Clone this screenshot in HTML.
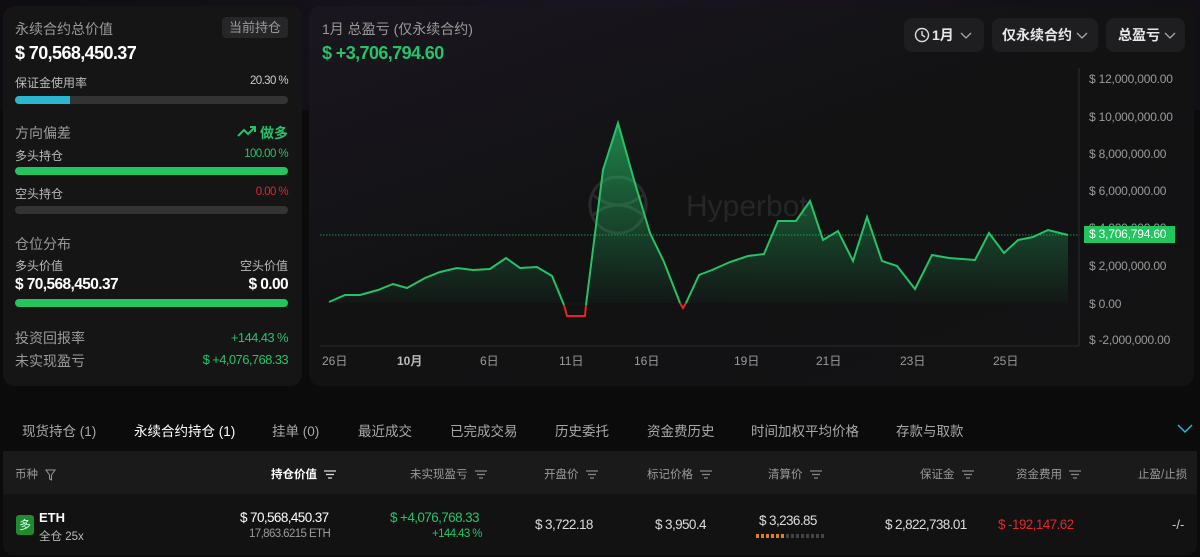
<!DOCTYPE html>
<html><head><meta charset="utf-8"><style>
*{margin:0;padding:0;box-sizing:border-box}
body{width:1200px;height:557px;overflow:hidden;background:#0b0b0c;font-family:"Liberation Sans","Noto Sans CJK SC",sans-serif;color:#fff;position:relative}
.a{position:absolute;white-space:nowrap}
.r{position:absolute;white-space:nowrap;right:912px;text-align:right}
.p{position:absolute;border-radius:12px}
.g{color:#9a9a9a}.gr{color:#25c367}.rd{color:#e0262b}
.n{letter-spacing:-0.6px}
.bar{position:absolute;height:8px;border-radius:4px;background:#333}
.btn{position:absolute;top:18px;height:34px;background:#1e1e20;border-radius:8px;font-size:14px;font-weight:bold;color:#e8e8e8;line-height:34px;padding-left:12px}
.btn svg.c{position:absolute;top:14px}
.yl{position:absolute;left:1089px;font-size:12px;color:#9a9a9a;letter-spacing:-0.2px}
.xl{position:absolute;top:352px;font-size:12px;color:#9a9a9a}
.tab{position:absolute;top:420px;font-size:13.5px;color:#a8a8a8}
.th{position:absolute;top:466px;font-size:11.5px;color:#9a9a9a}
.f{display:inline-block;vertical-align:middle;margin-left:4px}
</style></head><body>
<div class="p" style="left:0;top:-20px;width:1200px;height:130px;border-radius:0;background:linear-gradient(90deg,#0f0d12,#1a1420 50%,#120f16)"></div>
<div class="p" style="left:3px;top:6px;width:299px;height:380px;background:#151516"></div>
<div class="a g" style="left:15px;top:19px;font-size:14px">永续合约总价值</div>
<div class="a" style="left:222px;top:17px;width:66px;height:21px;background:#262628;border-radius:4px;font-size:13px;color:#9a9a9a;text-align:center;line-height:21px">当前持仓</div>
<div class="a n" style="left:15px;top:43px;font-size:18px;font-weight:bold">$ 70,568,450.37</div>
<div class="a" style="left:15px;top:74px;font-size:12px;color:#bbb">保证金使用率</div>
<div class="r n" style="top:75px;font-size:11.5px;color:#ccc">20.30 %</div>
<div class="bar" style="left:15px;top:96px;width:273px"></div>
<div class="bar" style="left:15px;top:96px;width:55px;background:#2bb6cf;border-radius:4px 0 0 4px"></div>
<div class="a g" style="left:15px;top:123px;font-size:14px">方向偏差</div>
<svg class="a" style="left:237px;top:126px" width="20" height="12" viewBox="0 0 20 12"><path d="M1 10 L7 4 L11 8 L18 1 M13 1 H18 V6" stroke="#25c367" stroke-width="2" fill="none"/></svg>
<div class="r gr" style="top:123px;font-size:14px;font-weight:bold">做多</div>
<div class="a" style="left:15px;top:147px;font-size:12px;color:#bbb">多头持仓</div>
<div class="r gr n" style="top:148px;font-size:11.5px">100.00 %</div>
<div class="bar" style="left:15px;top:167px;width:273px;background:#22c55e"></div>
<div class="a" style="left:15px;top:185px;font-size:12px;color:#bbb">空头持仓</div>
<div class="r rd n" style="top:186px;font-size:11.5px">0.00 %</div>
<div class="bar" style="left:15px;top:206px;width:273px"></div>
<div class="a g" style="left:15px;top:234px;font-size:14px">仓位分布</div>
<div class="a" style="left:15px;top:257px;font-size:12px;color:#bbb">多头价值</div>
<div class="r" style="top:257px;font-size:12px;color:#bbb">空头价值</div>
<div class="a n" style="left:15px;top:276px;font-size:15.5px;font-weight:bold">$ 70,568,450.37</div>
<div class="r n" style="top:276px;font-size:15.5px;font-weight:bold">$ 0.00</div>
<div class="bar" style="left:15px;top:299px;width:273px;background:#22c55e"></div>
<div class="a g" style="left:15px;top:328px;font-size:14px">投资回报率</div>
<div class="r gr n" style="top:330px;font-size:13px">+144.43 %</div>
<div class="a g" style="left:15px;top:351px;font-size:14px">未实现盈亏</div>
<div class="r gr n" style="top:352px;font-size:13px">$ +4,076,768.33</div>
<div class="p" style="left:309px;top:6px;width:885px;height:380px;background:linear-gradient(160deg,#1a1620,#121213 45%,#131314)"></div>
<div class="a g" style="left:322px;top:19px;font-size:14px">1月 总盈亏 (仅永续合约)</div>
<div class="a gr n" style="left:322px;top:43px;font-size:18px;font-weight:bold">$ +3,706,794.60</div>
<div class="btn" style="left:904px;width:80px"><svg style="position:absolute;left:10px;top:9px" width="16" height="16" viewBox="0 0 16 16"><circle cx="8" cy="8" r="6.5" stroke="#ddd" stroke-width="1.4" fill="none"/><path d="M8 4 V8 L11 10" stroke="#ddd" stroke-width="1.4" fill="none"/></svg><span style="margin-left:16px">1月</span><svg class="c" style="left:56px" width="12" height="7"><path d="M1 1 L6 6 L11 1" stroke="#aaa" stroke-width="1.3" fill="none"/></svg></div>
<div class="btn" style="left:992px;width:106px;padding-left:10px">仅永续合约<svg class="c" style="left:84px" width="12" height="7"><path d="M1 1 L6 6 L11 1" stroke="#aaa" stroke-width="1.3" fill="none"/></svg></div>
<div class="btn" style="left:1106px;width:79px">总盈亏<svg class="c" style="left:58px" width="12" height="7"><path d="M1 1 L6 6 L11 1" stroke="#aaa" stroke-width="1.3" fill="none"/></svg></div>
<svg class="a" style="left:588px;top:175px" width="260" height="60"><ellipse cx="30" cy="30" rx="28" ry="28" stroke="#2a2a2c" stroke-width="3" fill="none"/><path d="M5 20 Q30 40 55 20 M5 40 Q30 20 55 40" stroke="#2a2a2c" stroke-width="3" fill="none"/><text x="98" y="41" font-family="Liberation Sans" font-size="30" fill="#262628">Hyperbot</text></svg>
<svg class="a" style="left:0;top:0" width="1200" height="400">
<defs><linearGradient id="fg" x1="0" y1="120" x2="0" y2="305" gradientUnits="userSpaceOnUse"><stop offset="0" stop-color="#25c367" stop-opacity=".65"/><stop offset="1" stop-color="#25c367" stop-opacity="0.02"/></linearGradient></defs>
<line x1="1079" y1="68" x2="1079" y2="346" stroke="#2c2c2e"/>
<line x1="320" y1="346" x2="1079" y2="346" stroke="#2c2c2e"/>
<path d="M329 302 L345 295 L360 295 L378 290 L393 284 L407 288 L425 278 L440 272 L457 268 L473 270 L490 269 L506 258 L520 268 L537 267 L552 276 L564 305 L588 305 L603 170 L618 123 L634 180 L650 233 L664 262 L680 303 L686 303 L699 275 L712 270 L730 262 L748 256 L764 254 L778 221 L796 221 L810 201 L823 240 L838 231 L853 261 L867 217 L882 261 L897 266 L915 289 L932 255 L949 258 L975 260 L989 233 L1004 253 L1018 240 L1033 237 L1048 230 L1068 235 L1068 303 L329 303 Z" fill="url(#fg)"/>
<line x1="320" y1="235" x2="1079" y2="235" stroke="#25c367" stroke-width="1" stroke-dasharray="1.5 1.5" opacity=".7"/>
<path d="M329 302 L345 295 L360 295 L378 290 L393 284 L407 288 L425 278 L440 272 L457 268 L473 270 L490 269 L506 258 L520 268 L537 267 L552 276 L564 305" stroke="#25c367" stroke-width="2" fill="none"/>
<path d="M564 305 L567 316 L585 316 L586 305" stroke="#e0262b" stroke-width="2" fill="none"/>
<path d="M586 305 L603 170 L618 123 L634 180 L650 233 L664 262 L680 303" stroke="#25c367" stroke-width="2" fill="none"/>
<path d="M680 303 L683 308 L686 303" stroke="#e0262b" stroke-width="2" fill="none"/>
<path d="M686 303 L699 275 L712 270 L730 262 L748 256 L764 254 L778 221 L796 221 L810 201 L823 240 L838 231 L853 261 L867 217 L882 261 L897 266 L915 289 L932 255 L949 258 L975 260 L989 233 L1004 253 L1018 240 L1033 237 L1048 230 L1068 235" stroke="#25c367" stroke-width="2" fill="none"/>
</svg>
<div class="yl" style="top:72px">$ 12,000,000.00</div>
<div class="yl" style="top:110px">$ 10,000,000.00</div>
<div class="yl" style="top:147px">$ 8,000,000.00</div>
<div class="yl" style="top:184px">$ 6,000,000.00</div>
<div class="yl" style="top:221px">$ 4,000,000.00</div>
<div class="yl" style="top:259px">$ 2,000,000.00</div>
<div class="yl" style="top:297px">$ 0.00</div>
<div class="yl" style="top:333px">$ -2,000,000.00</div>
<div class="a" style="left:1084px;top:226px;width:91px;height:17px;background:#22c55e;color:#fff;font-size:12px;line-height:17px;padding-left:5px;letter-spacing:-0.2px">$ 3,706,794.60</div>
<div class="xl" style="left:322px">26日</div>
<div class="xl" style="left:397px;font-weight:bold;color:#bbb">10月</div>
<div class="xl" style="left:480px">6日</div>
<div class="xl" style="left:559px">11日</div>
<div class="xl" style="left:634px">16日</div>
<div class="xl" style="left:734px">19日</div>
<div class="xl" style="left:816px">21日</div>
<div class="xl" style="left:900px">23日</div>
<div class="xl" style="left:993px">25日</div>
<div class="tab" style="left:22px">现货持仓 (1)</div>
<div class="tab" style="left:134px;color:#fff">永续合约持仓 (1)</div>
<div class="tab" style="left:272px">挂单 (0)</div>
<div class="tab" style="left:358px">最近成交</div>
<div class="tab" style="left:450px">已完成交易</div>
<div class="tab" style="left:555px">历史委托</div>
<div class="tab" style="left:647px">资金费历史</div>
<div class="tab" style="left:751px">时间加权平均价格</div>
<div class="tab" style="left:896px">存款与取款</div>
<svg class="a" style="left:1177px;top:424px" width="16" height="10"><path d="M1 1 L8 8 L15 1" stroke="#2bb6cf" stroke-width="1.5" fill="none"/></svg>
<div class="p" style="left:3px;top:451px;width:1194px;height:104px;background:#121213;border-radius:0 0 10px 10px"></div>
<div class="a" style="left:3px;top:451px;width:1194px;height:43px;background:#1a1a1b"></div>
<div class="th" style="left:15px">币种 <svg class="f" width="11" height="12"><path d="M1 1 H10 L6.5 6 V11 L4.5 10 V6 Z" stroke="#999" fill="none"/></svg></div>
<div class="th" style="left:271px;color:#fff;font-weight:bold">持仓价值 <svg class="f" width="12" height="9"><path d="M0 1H12M2 4.5H10M4 8H8" stroke="#ddd" stroke-width="1.3"/></svg></div>
<div class="th" style="left:410px">未实现盈亏 <svg class="f" width="12" height="9"><path d="M0 1H12M2 4.5H10M4 8H8" stroke="#888" stroke-width="1.3"/></svg></div>
<div class="th" style="left:544px">开盘价 <svg class="f" width="12" height="9"><path d="M0 1H12M2 4.5H10M4 8H8" stroke="#888" stroke-width="1.3"/></svg></div>
<div class="th" style="left:647px">标记价格 <svg class="f" width="12" height="9"><path d="M0 1H12M2 4.5H10M4 8H8" stroke="#888" stroke-width="1.3"/></svg></div>
<div class="th" style="left:768px">清算价 <svg class="f" width="12" height="9"><path d="M0 1H12M2 4.5H10M4 8H8" stroke="#888" stroke-width="1.3"/></svg></div>
<div class="th" style="left:920px">保证金 <svg class="f" width="12" height="9"><path d="M0 1H12M2 4.5H10M4 8H8" stroke="#888" stroke-width="1.3"/></svg></div>
<div class="th" style="left:1016px">资金费用 <svg class="f" width="12" height="9"><path d="M0 1H12M2 4.5H10M4 8H8" stroke="#888" stroke-width="1.3"/></svg></div>
<div class="th" style="left:1138px">止盈/止损</div>
<div class="a" style="left:16px;top:515px;width:18px;height:20px;background:#1f8a2e;border-radius:3px;font-size:12px;text-align:center;line-height:20px;color:#cfe">多</div>
<div class="a" style="left:39px;top:510px;font-size:13px;font-weight:bold">ETH</div>
<div class="a" style="left:39px;top:528px;font-size:11.5px;color:#bbb">全仓 25x</div>
<div class="a n" style="left:240px;top:510px;font-size:13.5px">$ 70,568,450.37</div>
<div class="a g n" style="left:249px;top:528px;font-size:11.5px">17,863.6215 ETH</div>
<div class="a gr n" style="left:390px;top:510px;font-size:13.5px">$ +4,076,768.33</div>
<div class="a gr n" style="left:432px;top:528px;font-size:11.5px">+144.43 %</div>
<div class="a n" style="left:535px;top:517px;font-size:13.5px;color:#ddd">$ 3,722.18</div>
<div class="a n" style="left:655px;top:517px;font-size:13.5px;color:#ddd">$ 3,950.4</div>
<div class="a n" style="left:759px;top:513px;font-size:13.5px;color:#ddd">$ 3,236.85</div>
<div class="a" style="left:756px;top:534px;height:4px;width:70px;background:repeating-linear-gradient(90deg,#d9811c 0 3px,transparent 3px 5px);"></div>
<div class="a" style="left:786px;top:534px;height:4px;width:40px;background:repeating-linear-gradient(90deg,#444 0 3px,#121213 3px 5px);"></div>
<div class="a n" style="left:885px;top:517px;font-size:13.5px;color:#ddd">$ 2,822,738.01</div>
<div class="a rd n" style="left:998px;top:517px;font-size:13.5px">$ -192,147.62</div>
<div class="a" style="left:1172px;top:517px;font-size:13px;color:#ccc">-/-</div>
</body></html>
